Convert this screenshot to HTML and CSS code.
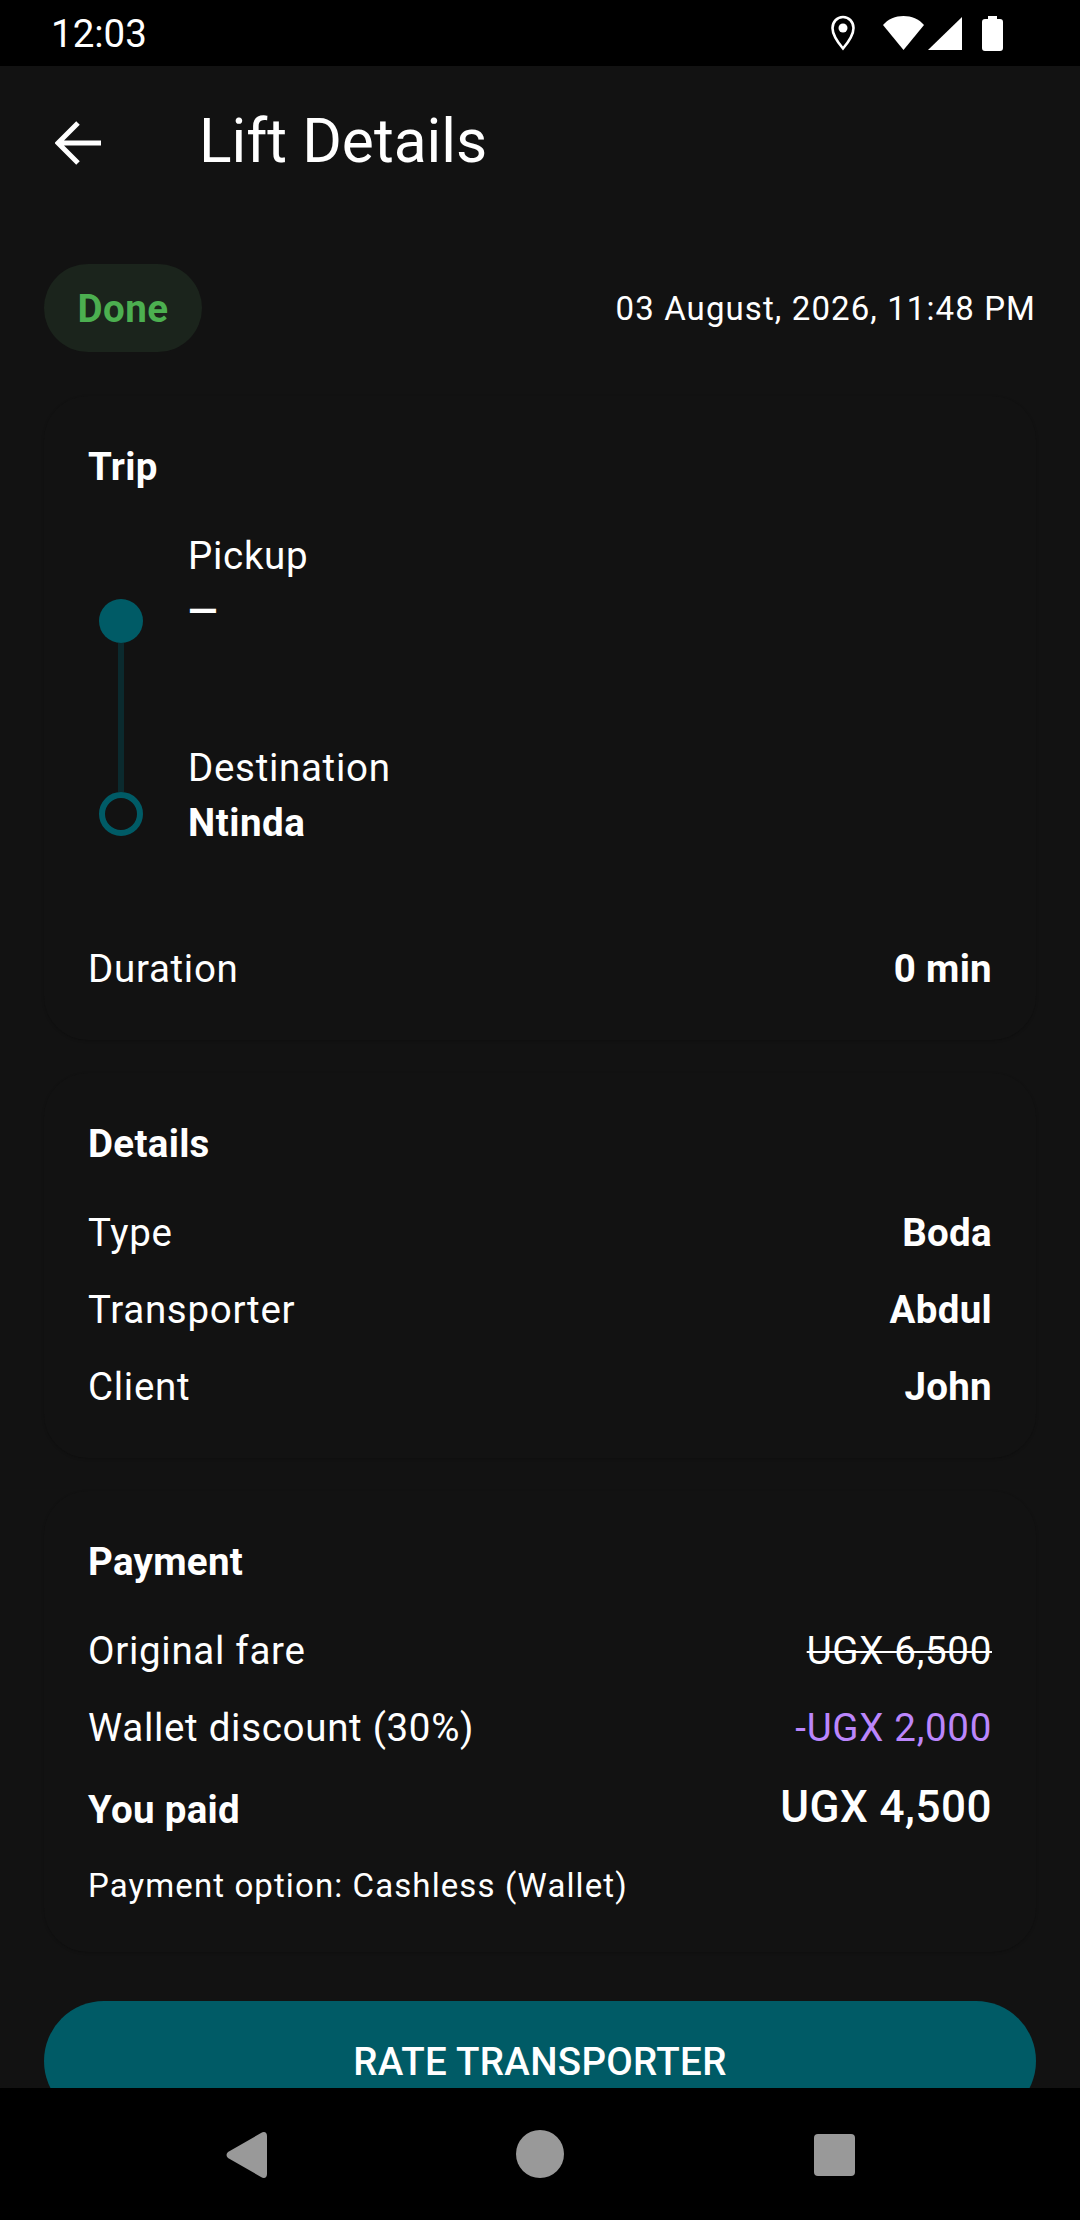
FILE: index.html
```html
<!DOCTYPE html>
<html lang="en">
<head>
  <meta charset="UTF-8" />
  <meta name="viewport" content="width=device-width, initial-scale=1.0" />
  <title>Lift Details</title>
  <link rel="stylesheet" href="styles.css">
</head>
<body>
  <div class="screen">
    <div class="status-bar">
      <span class="clock">12:03</span>
      <div class="status-icons">
        <svg class="pin" width="26" height="36" viewBox="0 0 26 36"><path d="M13 2C7 2 2.500 7 2.500 13c0 6 5 14 10.500 20.500C18.500 27 23.500 19 23.500 13 23.500 7 19 2 13 2z" fill="none" stroke="#fff" stroke-width="2.600"/><circle cx="13" cy="13" r="4.500" fill="#fff"/></svg>
        <svg class="wifi" width="41" height="34" viewBox="0 0 41 34"><path d="M0 9C5 3 12.500 0 20.500 0S36 3 41 9L20.500 34z" fill="#fff"/></svg>
        <svg class="signal" width="34" height="33" viewBox="0 0 34 33"><path d="M34 0v33H0z" fill="#fff"/></svg>
        <svg width="21" height="35" viewBox="0 0 21 35"><path d="M6 0h9v3h3c2 0 3 1 3 3v26c0 2-1 3-3 3H3c-2 0-3-1-3-3V6c0-2 1-3 3-3h3z" fill="#fff"/></svg>
      </div>
    </div>

    <header class="toolbar">
      <svg class="back" width="46" height="44" viewBox="0 0 46 44"><path d="M46 22H4M23 2 3 22l20 20" fill="none" stroke="#fff" stroke-width="5"/></svg>
      <h1>Lift Details</h1>
    </header>

    <main>
      <div class="top-row">
        <span class="pill">Done</span>
        <span class="date">03 August, 2026, 11:48 PM</span>
      </div>

      <section class="card">
        <h3>Trip</h3>
        <div class="route">
          <div class="timeline">
            <span class="dot"></span>
            <span class="line"></span>
            <span class="ring"></span>
          </div>
          <div class="stops">
            <div class="stop">
              <div class="label">Pickup</div>
              <div class="value">—</div>
            </div>
            <div class="stop">
              <div class="label">Destination</div>
              <div class="value">Ntinda</div>
            </div>
          </div>
        </div>
        <div class="row"><span>Duration</span><b>0 min</b></div>
      </section>

      <section class="card">
        <h3>Details</h3>
        <div class="row"><span>Type</span><b>Boda</b></div>
        <div class="row"><span>Transporter</span><b>Abdul</b></div>
        <div class="row"><span>Client</span><b>John</b></div>
      </section>

      <section class="card card-last">
        <h3>Payment</h3>
        <div class="row"><span>Original fare</span><s>UGX 6,500</s></div>
        <div class="row"><span>Wallet discount (30%)</span><span class="discount">-UGX 2,000</span></div>
        <div class="row paid"><b>You paid</b><b class="total">UGX 4,500</b></div>
        <p class="option">Payment option: Cashless (Wallet)</p>
      </section>

      <button class="rate">RATE TRANSPORTER</button>
    </main>

    <nav class="nav-bar">
      <svg class="nav-back" width="41" height="46" viewBox="0 0 41 46"><path d="M35 1c3-2 6-1 6 3v38c0 4-3 5-6 3L2 26c-2-2-2-4 0-6z" fill="#999"/></svg>
      <span class="home"></span>
      <span class="square"></span>
    </nav>
  </div>
</body>
</html>
```

FILE: styles.css
```css
* {
  box-sizing: border-box;
}

body {
  margin: 0;
  background: #121212;
  color: #fff;
  font-family: Roboto, sans-serif;
}

.screen {
  position: relative;
  width: 1080px;
  height: 2220px;
  overflow: hidden;
}

.status-bar {
  display: flex;
  align-items: center;
  justify-content: space-between;
  height: 66px;
  padding: 0 77px 0 51px;
  background: #000;
}

.clock {
  font-size: 38.500px;
  line-height: 44px;
  margin-top: 2px;
}

.status-icons {
  display: flex;
  align-items: center;
}

.pin {
  margin-right: 27px;
}

.wifi {
  margin-right: 4px;
}

.signal {
  margin-right: 20px;
}

.toolbar {
  display: flex;
  align-items: center;
  height: 150px;
  padding-left: 55px;
}

.back {
  flex: none;
  margin-top: 4px;
}

.toolbar h1 {
  margin: 0 0 0 98px;
  font-size: 60.500px;
  font-weight: 400;
}

main {
  padding: 48px 44px 0;
}

.top-row {
  display: flex;
  align-items: center;
  justify-content: space-between;
  margin-bottom: 44px;
}

.pill {
  display: flex;
  align-items: center;
  justify-content: center;
  width: 158px;
  height: 88px;
  border-radius: 44px;
  background: #1b241c;
  color: #4caf50;
  font-size: 38.500px;
  font-weight: 700;
  letter-spacing: 0.500px;
}

.date {
  font-size: 33px;
  letter-spacing: 1.100px;
}

.card {
  margin-bottom: 33px;
  padding: 44px 44px 33px;
  border-radius: 44px;
  background: #121212;
  box-shadow: 0 1px 3px rgba(0, 0, 0, 0.2);
}

.card-last {
  margin-bottom: 49px;
}

.card h3 {
  margin: 0 0 23px;
  font-size: 38.500px;
  line-height: 54px;
  font-weight: 700;
  letter-spacing: 0.300px;
}

.row {
  display: flex;
  align-items: center;
  justify-content: space-between;
  height: 77px;
  font-size: 38.500px;
  letter-spacing: 0.700px;
}

.row b {
  font-weight: 700;
  letter-spacing: 0.300px;
}

.row s {
  text-decoration-thickness: 2px;
}

.route {
  display: flex;
  height: 413px;
}

.timeline {
  display: flex;
  flex-direction: column;
  align-items: center;
  width: 66px;
  padding-top: 82px;
}

.dot {
  flex: none;
  width: 44px;
  height: 44px;
  border-radius: 50%;
  background: #005b66;
}

.line {
  flex: none;
  width: 6px;
  height: 149px;
  background: #0b2a2e;
}

.ring {
  flex: none;
  width: 44px;
  height: 44px;
  border: 6px solid #005b66;
  border-radius: 50%;
}

.stops {
  display: flex;
  flex-direction: column;
  gap: 102px;
  margin-left: 34px;
  padding-top: 11px;
  font-size: 38.500px;
}

.label {
  line-height: 55px;
  letter-spacing: 0.700px;
}

.value {
  line-height: 55px;
  font-weight: 700;
  letter-spacing: 0.500px;
}

.discount {
  color: #bb86fc;
}

.paid {
  height: 87px;
}

.row .total {
  margin-bottom: 5px;
  font-size: 44px;
  font-weight: 500;
  letter-spacing: 0.500px;
}

.option {
  margin: 0;
  font-size: 33px;
  line-height: 66px;
  letter-spacing: 1.100px;
}

.rate {
  display: block;
  width: 100%;
  height: 120px;
  border: none;
  border-radius: 60px;
  background: #005b66;
  color: #fff;
  font-family: Roboto, sans-serif;
  font-size: 38.500px;
  font-weight: 500;
  letter-spacing: 0.300px;
}

.nav-bar {
  position: absolute;
  left: 0;
  right: 0;
  bottom: 0;
  display: flex;
  align-items: center;
  justify-content: center;
  height: 132px;
  background: #000;
}

.nav-back {
  position: absolute;
  left: 226px;
  top: 44px;
}

.home {
  width: 48px;
  height: 48px;
  border-radius: 50%;
  background: #999;
}

.square {
  position: absolute;
  left: 814px;
  top: 46px;
  width: 41px;
  height: 42px;
  border-radius: 4px;
  background: #999;
}
```
